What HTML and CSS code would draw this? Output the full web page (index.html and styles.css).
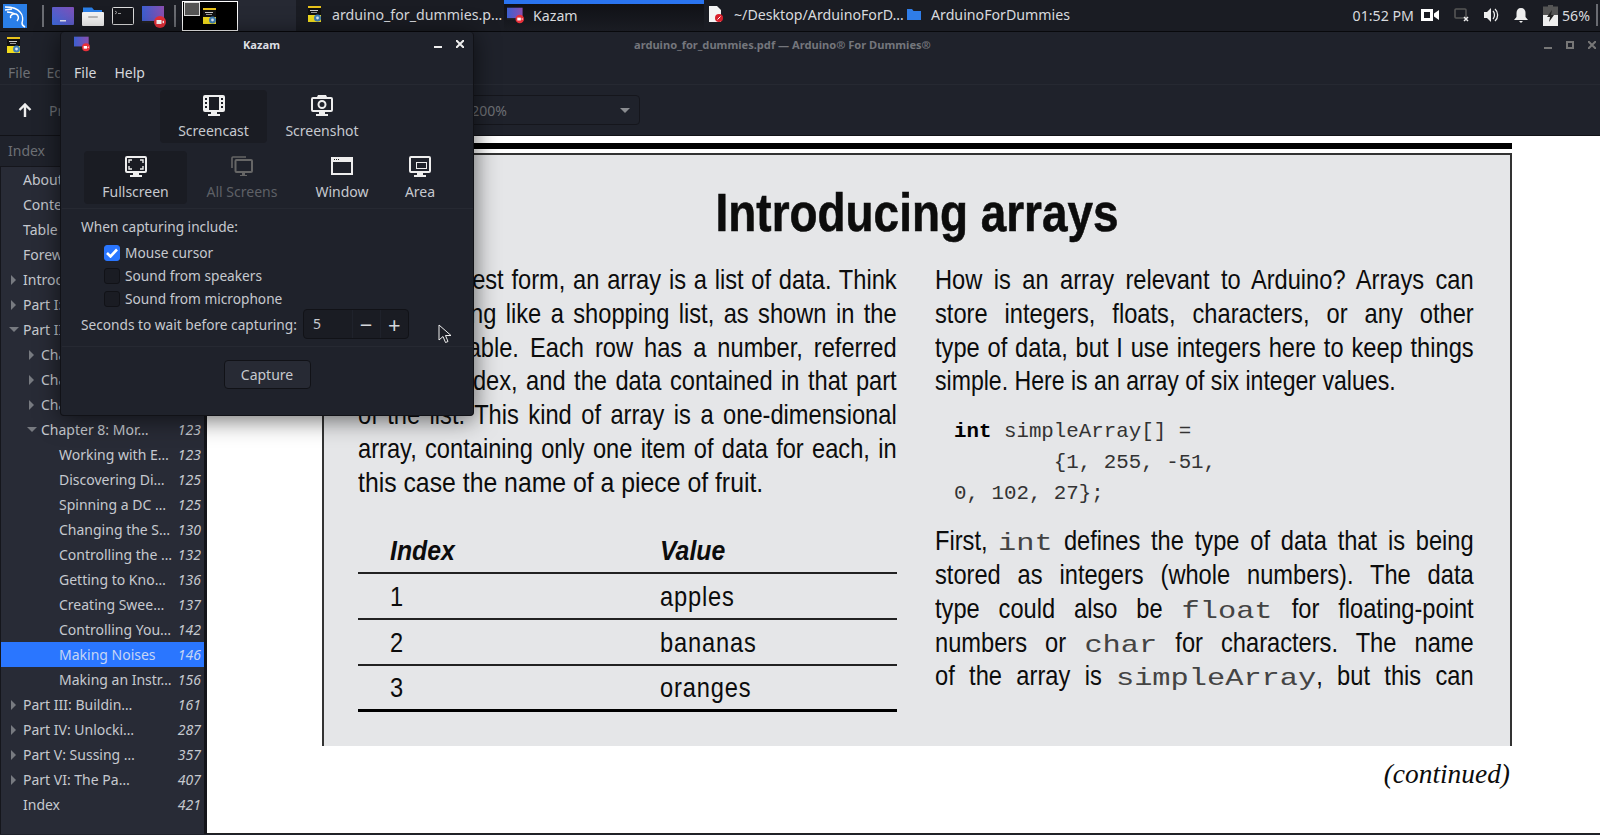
FILE: index.html
```html
<!DOCTYPE html>
<html lang="en">
<head>
    <meta charset="UTF-8">
    <title>arduino_for_dummies.pdf — Arduino® For Dummies®</title>
    <link rel="stylesheet" href="styles.css">
</head>
<body>
    <svg class="defs">
        <defs>
            <linearGradient id="kz" x1="0" y1="0" x2="1" y2="0">
                <stop offset="0" stop-color="#3c5fd0"/>
                <stop offset="1" stop-color="#8a4fb0"/>
            </linearGradient>
        </defs>
        <symbol id="book" viewBox="0 0 13 16">
            <rect width="13" height="16" fill="#111"/>
            <rect width="13" height="2" fill="#e8c21c"/>
            <rect x="2" y="4" width="8" height="1" fill="#ccc"/>
            <rect x="3" y="6" width="6" height="1" fill="#999"/>
            <rect y="9" width="13" height="7" fill="#f2dc1d"/>
            <circle cx="9.500" cy="12" r="3.500" fill="#3f7fb5"/>
            <circle cx="9.500" cy="12" r="1.400" fill="#dfe9f1"/>
        </symbol>
        <symbol id="kazam" viewBox="0 0 24 24">
            <rect x="0" y="1" width="22" height="15" fill="url(#kz)"/>
            <rect x="0" y="16" width="22" height="2" fill="#222"/>
            <circle cx="18" cy="17" r="6" fill="#e8303a"/>
            <rect x="14.500" y="15" width="5" height="4" fill="#fff"/>
            <path d="M20 17l2-1.500v3z" fill="#fff"/>
        </symbol>
    </svg>

    <header class="taskbar">
        <div class="launchers">
            <svg class="kali" width="24" height="24" viewBox="0 0 24 24">
                <rect width="24" height="24" fill="#2a7fe8"/>
                <path d="M2 3c6 0 12 1 15 5 3 3 3 8 2 11 0 2 1 3 3 4M2 6l7-1M4 8c3 0 6 1 8 2M8 14c-2-2 2-5 5-4 3 1 3 5 1 7" fill="none" stroke="#fff" stroke-width="1.500"/>
            </svg>
            <span class="sep"></span>
            <svg width="22" height="18" viewBox="0 0 22 18">
                <defs>
                    <linearGradient id="desk" x1="0" y1="1" x2="1" y2="0">
                        <stop offset="0" stop-color="#3a68d8"/>
                        <stop offset="1" stop-color="#8050b8"/>
                    </linearGradient>
                </defs>
                <rect width="22" height="18" rx="1" fill="url(#desk)"/>
                <rect x="8" y="13" width="6" height="1.500" fill="#dde"/>
            </svg>
            <svg width="22" height="20" viewBox="0 0 22 20">
                <path d="M1 5V1.500h9l2 2.500h8v2H1z" fill="#2a7fe8"/>
                <rect y="6" width="22" height="14" rx="1" fill="#f4f4f4"/>
                <rect x="6" y="10" width="10" height="2" rx="1" fill="#bbb"/>
            </svg>
            <svg width="22" height="18" viewBox="0 0 22 18">
                <rect x="0.500" y="0.500" width="21" height="17" rx="1" fill="#15161b" stroke="#ddd"/>
                <path d="M3 4l2 1.500L3 7" fill="none" stroke="#999"/>
                <rect x="6" y="6" width="3" height="1" fill="#999"/>
            </svg>
            <svg class="kazam-big" width="24" height="24"><use href="#kazam"/></svg>
            <span class="sep"></span>
        </div>
        <div class="pager">
            <span class="pager-win"></span>
            <svg width="13" height="16"><use href="#book"/></svg>
        </div>
        <div class="pager-rest"></div>
        <div class="task task-pdf">
            <svg width="13" height="16"><use href="#book"/></svg>
            <span>arduino_for_dummies.p…</span>
        </div>
        <div class="task task-kazam">
            <svg width="17" height="17"><use href="#kazam"/></svg>
            <span>Kazam</span>
        </div>
        <div class="task task-gedit">
            <svg width="14" height="16" viewBox="0 0 14 16">
                <path d="M0 0h8l4 4v12H0z" fill="#f4f4f4"/>
                <circle cx="10" cy="12" r="4" fill="#d8202c"/>
                <path d="M8.500 13.500l3-3" stroke="#fff"/>
            </svg>
            <span>~/Desktop/ArduinoForD…</span>
        </div>
        <div class="task task-folder">
            <svg width="14" height="11" viewBox="0 0 14 11">
                <path d="M0 0h5l1.500 2H14v9H0z" fill="#2f7de8"/>
            </svg>
            <span>ArduinoForDummies</span>
        </div>
        <div class="tray">
            <span class="clock">01:52 PM</span>
            <svg width="18" height="12" viewBox="0 0 18 12">
                <path d="M0 0h12v12H0zM3 3v6h6V3zM13 4.500L18 1v10l-5-3.500z" fill="#fff" fill-rule="evenodd"/>
            </svg>
            <svg width="15" height="14" viewBox="0 0 15 14">
                <rect x="1" y="1" width="11" height="9" rx="1" fill="none" stroke="#555" stroke-width="1.600"/>
                <path d="M10 9l4 4M14 9l-4 4" stroke="#eee" stroke-width="1.500"/>
            </svg>
            <svg width="15" height="14" viewBox="0 0 15 14">
                <path d="M0 4h3l4-4v14l-4-4H0z" fill="#eee"/>
                <path d="M9 3c2 2 2 6 0 8M11 1c3.500 3 3.500 9 0 12" fill="none" stroke="#eee" stroke-width="1.300"/>
            </svg>
            <svg width="14" height="15" viewBox="0 0 14 15">
                <path d="M7 0c3 0 4.500 2 4.500 5v4l2.500 3H0l2.500-3V5C2.500 2 4 0 7 0zM5 13h4l-2 2z" fill="#eee"/>
            </svg>
            <svg width="15" height="21" viewBox="0 0 15 21">
                <path d="M5 0h5v1.500h5V10H0V1.500h5z" fill="#555"/>
                <rect y="10" width="15" height="11" fill="#eee"/>
                <path d="M9 5L4 12h3l-1 5 5-7H8z" fill="#222"/>
            </svg>
            <span class="batt">56%</span>
            <span class="sep tray-sep"></span>
        </div>
    </header>

    <main class="evince">
        <div class="titlebar">
            <svg class="app-icon" width="13" height="16"><use href="#book"/></svg>
            <span class="win-title">arduino_for_dummies.pdf — Arduino® For Dummies®</span>
            <div class="win-btns">
                <svg width="8" height="8" viewBox="0 0 8 8"><rect y="6" width="8" height="2" fill="#777"/></svg>
                <svg width="8" height="8" viewBox="0 0 8 8"><rect x="1" y="1" width="6" height="6" fill="none" stroke="#777" stroke-width="2"/></svg>
                <svg width="8" height="8" viewBox="0 0 8 8"><path d="M0 0l8 8M8 0L0 8" stroke="#777" stroke-width="2"/></svg>
            </div>
        </div>
        <nav class="menubar"><span>File</span><span>Edit</span></nav>
        <div class="toolbar">
            <svg class="up" width="14" height="14" viewBox="0 0 14 14"><path d="M7 14V2M1.500 7L7 1.500 12.500 7" fill="none" stroke="#eee" stroke-width="2.400"/></svg>
            <span class="prev">Previous</span>
            <div class="zoom-box"><span>200%</span><i class="caret"></i></div>
        </div>
        <div class="content">
            <aside class="sidebar">
                <div class="side-head">Index</div>
                <ul class="tree">
                    <li class="lv0"><i></i><span>About the Aut…</span><em>1</em></li>
                    <li class="lv0"><i></i><span>Contents at a…</span><em>9</em></li>
                    <li class="lv0"><i></i><span>Table of Cont…</span><em>11</em></li>
                    <li class="lv0"><i></i><span>Foreword</span><em>17</em></li>
                    <li class="lv0"><i class="closed"></i><span>Introduction</span><em>19</em></li>
                    <li class="lv0"><i class="closed"></i><span>Part I: Getting…</span><em>7</em></li>
                    <li class="lv0"><i class="open"></i><span>Part II: Gettin…</span><em>65</em></li>
                    <li class="lv1"><i class="closed"></i><span>Chapter 5: Ge…</span><em>67</em></li>
                    <li class="lv1"><i class="closed"></i><span>Chapter 6: Ha…</span><em>87</em></li>
                    <li class="lv1"><i class="closed"></i><span>Chapter 7: Ba…</span><em>101</em></li>
                    <li class="lv1"><i class="open"></i><span>Chapter 8: Mor…</span><em>123</em></li>
                    <li class="lv2"><i></i><span>Working with E…</span><em>123</em></li>
                    <li class="lv2"><i></i><span>Discovering Di…</span><em>125</em></li>
                    <li class="lv2"><i></i><span>Spinning a DC …</span><em>125</em></li>
                    <li class="lv2"><i></i><span>Changing the S…</span><em>130</em></li>
                    <li class="lv2"><i></i><span>Controlling the …</span><em>132</em></li>
                    <li class="lv2"><i></i><span>Getting to Kno…</span><em>136</em></li>
                    <li class="lv2"><i></i><span>Creating Swee…</span><em>137</em></li>
                    <li class="lv2"><i></i><span>Controlling You…</span><em>142</em></li>
                    <li class="lv2 selected"><i></i><span>Making Noises</span><em>146</em></li>
                    <li class="lv2"><i></i><span>Making an Instr…</span><em>156</em></li>
                    <li class="lv0"><i class="closed"></i><span>Part III: Buildin…</span><em>161</em></li>
                    <li class="lv0"><i class="closed"></i><span>Part IV: Unlocki…</span><em>287</em></li>
                    <li class="lv0"><i class="closed"></i><span>Part V: Sussing …</span><em>357</em></li>
                    <li class="lv0"><i class="closed"></i><span>Part VI: The Pa…</span><em>407</em></li>
                    <li class="lv0"><i></i><span>Index</span><em>421</em></li>
                </ul>
            </aside>
            <section class="page">
                <div class="rule"></div>
                <article class="box">
                    <h1><span>Introducing arrays</span></h1>
                    <div class="cols">
                        <div class="col">
                            <p>
                                <span class="ln">In its simplest form, an array is a list of data. Think</span>
                                <span class="ln">of something like a shopping list, as shown in the</span>
                                <span class="ln">following table. Each row has a number, referred</span>
                                <span class="ln">to as an index, and the data contained in that part</span>
                                <span class="ln">of the list. This kind of array is a one-dimensional</span>
                                <span class="ln">array, containing only one item of data for each, in</span>
                                <span class="ln last wide">this case the name of a piece of fruit.</span>
                            </p>
                            <table class="fruit">
                                <thead><tr><th><span>Index</span></th><th><span>Value</span></th></tr></thead>
                                <tbody>
                                    <tr><td><span>1</span></td><td><span>apples</span></td></tr>
                                    <tr><td><span>2</span></td><td><span>bananas</span></td></tr>
                                    <tr><td><span>3</span></td><td><span>oranges</span></td></tr>
                                </tbody>
                            </table>
                        </div>
                        <div class="col">
                            <p>
                                <span class="ln">How is an array relevant to Arduino? Arrays can</span>
                                <span class="ln">store integers, floats, characters, or any other</span>
                                <span class="ln">type of data, but I use integers here to keep things</span>
                                <span class="ln last">simple. Here is an array of six integer values.</span>
                            </p>
                            <pre class="code"><b>int</b> simpleArray[] =
        {1, 255, -51,
0, 102, 27};</pre>
                            <p>
                                <span class="ln">First, <code class="w3">int</code> defines the type of data that is being</span>
                                <span class="ln">stored as integers (whole numbers). The data</span>
                                <span class="ln">type could also be <code class="w5">float</code> for floating-point</span>
                                <span class="ln">numbers or <code class="w4">char</code> for characters. The name</span>
                                <span class="ln">of the array is <code class="w11">simpleArray</code>, but this can</span>
                            </p>
                        </div>
                    </div>
                </article>
                <div class="continued">(continued)</div>
            </section>
        </div>
    </main>

    <div class="kazam-win">
        <div class="kz-title">
            <svg width="16" height="16"><use href="#kazam"/></svg>
            <span>Kazam</span>
            <svg class="kz-min" width="8" height="8" viewBox="0 0 8 8"><rect y="6" width="8" height="2" fill="#eee"/></svg>
            <svg class="kz-close" width="8" height="8" viewBox="0 0 8 8"><path d="M0 0l8 8M8 0L0 8" stroke="#eee" stroke-width="2"/></svg>
        </div>
        <nav class="kz-menu"><span>File</span><span>Help</span></nav>
        <div class="kz-modes">
            <div class="kz-btn on">
                <svg width="22" height="21" viewBox="0 0 22 21">
                    <path d="M2 0h18a2 2 0 0 1 2 2v13a2 2 0 0 1-2 2h-6v2h3v2H5v-2h3v-2H2a2 2 0 0 1-2-2V2a2 2 0 0 1 2-2zM6 2v13h10V2zM2 3v2h2V3zM2 7v2h2V7zM2 11v2h2v-2zM18 3v2h2V3zM18 7v2h2V7zM18 11v2h2v-2z" fill="#eee" fill-rule="evenodd"/>
                </svg>
                <span>Screencast</span>
            </div>
            <div class="kz-btn">
                <svg width="22" height="21" viewBox="0 0 22 21">
                    <path d="M7 0h8l1 2h4a2 2 0 0 1 2 2v11a2 2 0 0 1-2 2h-6v2h3v2H5v-2h3v-2H2a2 2 0 0 1-2-2V4a2 2 0 0 1 2-2h4zM2 4v11h18V4z" fill="#eee" fill-rule="evenodd"/>
                    <circle cx="11" cy="9.500" r="3.500" fill="none" stroke="#eee" stroke-width="2"/>
                </svg>
                <span>Screenshot</span>
            </div>
        </div>
        <div class="kz-areas">
            <div class="kz-btn on">
                <svg width="22" height="21" viewBox="0 0 22 21">
                    <path d="M2 0h18a2 2 0 0 1 2 2v13a2 2 0 0 1-2 2h-6v2h3v2H5v-2h3v-2H2a2 2 0 0 1-2-2V2a2 2 0 0 1 2-2zM2 2v13h18V2z" fill="#eee" fill-rule="evenodd"/>
                    <path d="M4 7V4h3M15 4h3v3M18 10v3h-3M7 13H4v-3" fill="none" stroke="#eee" stroke-width="1.400"/>
                </svg>
                <span>Fullscreen</span>
            </div>
            <div class="kz-btn off">
                <svg width="22" height="21" viewBox="0 0 22 21">
                    <path d="M1 12V2a1 1 0 0 1 1-1h13" fill="none" stroke="#666" stroke-width="1.600"/>
                    <rect x="4.500" y="4" width="16.500" height="12" rx="1" fill="none" stroke="#666" stroke-width="2"/>
                    <path d="M11 16h3v3h2v1H9v-1h2z" fill="#666"/>
                </svg>
                <span>All Screens</span>
            </div>
            <div class="kz-btn">
                <svg width="22" height="21" viewBox="0 0 22 21">
                    <path d="M0 1h22v18H0zM2 6v11h18V6z" fill="#eee" fill-rule="evenodd"/>
                    <path d="M3 3h1v1H3zM5 3h1v1H5zM7 3h1v1H7z" fill="#222"/>
                </svg>
                <span>Window</span>
            </div>
            <div class="kz-btn">
                <svg width="22" height="21" viewBox="0 0 22 21">
                    <path d="M2 0h18a2 2 0 0 1 2 2v13a2 2 0 0 1-2 2h-6v2h3v2H5v-2h3v-2H2a2 2 0 0 1-2-2V2a2 2 0 0 1 2-2zM2 2v13h18V2z" fill="#eee" fill-rule="evenodd"/>
                    <rect x="7.500" y="6.500" width="10" height="6" fill="none" stroke="#eee"/>
                </svg>
                <span>Area</span>
            </div>
        </div>
        <div class="kz-options">
            <div class="kz-include">When capturing include:</div>
            <label class="kz-check"><i class="box-on"><svg width="12" height="10" viewBox="0 0 12 10"><path d="M1 5l3.500 3.500L11 1.500" fill="none" stroke="#fff" stroke-width="2.600"/></svg></i>Mouse cursor</label>
            <label class="kz-check"><i></i>Sound from speakers</label>
            <label class="kz-check"><i></i>Sound from microphone</label>
            <div class="kz-wait">
                <span>Seconds to wait before capturing:</span>
                <div class="spin">
                    <span class="spin-val">5</span>
                    <span class="spin-btn">−</span>
                    <span class="spin-btn">+</span>
                </div>
            </div>
        </div>
        <div class="kz-foot"><button class="capture">Capture</button></div>
        <svg class="pointer" width="14" height="20" viewBox="0 0 14 20">
            <path d="M1 1v15l4-3.500 2.500 6 2.500-1-2.500-6H13z" fill="#1c1e26" stroke="#eee"/>
        </svg>
    </div>
</body>
</html>
```

FILE: styles.css
```css
* {
    box-sizing: border-box;
}
html, body {
    margin: 0;
    height: 835px;
    overflow: hidden;
}
body {
    position: relative;
    background: #1f222b;
    color: #c6c9cf;
    font-family: "Noto Sans", sans-serif;
    font-size: 14px;
}
.defs {
    position: absolute;
    width: 0;
    height: 0;
}

/* panel */
.taskbar {
    display: flex;
    align-items: center;
    height: 32px;
    background: #1a1c23;
    border-bottom: 1px solid #08090c;
}
.launchers {
    display: flex;
    align-items: center;
    gap: 8px;
    width: 182px;
    padding-left: 3px;
}
.kali {
    margin-right: 7px;
}
.sep {
    width: 2px;
    height: 22px;
    background: #6a6c72;
}
.kazam-big {
    margin-top: 2px;
}
.pager {
    display: flex;
    align-items: center;
    justify-content: flex-end;
    position: relative;
    width: 56px;
    height: 30px;
    padding-right: 21px;
    background: #000;
    border: 1px solid #fff;
}
.pager-win {
    position: absolute;
    left: 1px;
    top: 0;
    width: 16px;
    height: 14px;
    background: #555;
    border: 1px solid #ddd;
}
.pager-rest {
    width: 58px;
    height: 31px;
    background: #262933;
}
.task {
    display: flex;
    align-items: center;
    gap: 11px;
    height: 31px;
    padding-bottom: 3px;
    color: #d8dade;
    font-size: 14.200px;
    white-space: nowrap;
}
.task-pdf {
    width: 208px;
    padding-left: 12px;
}
.task-kazam {
    width: 200px;
    padding-left: 3px;
    padding-bottom: 4px;
    gap: 9px;
    background: linear-gradient(#101116, #1a1c23);
    border-top: 4px solid #2a74f0;
}
.task-gedit {
    width: 203px;
    padding-left: 5px;
}
.task-folder {
    gap: 10px;
}
.tray {
    display: flex;
    align-items: center;
    gap: 15px;
    margin-left: auto;
    padding-right: 2px;
    padding-bottom: 1px;
    color: #d8dade;
}
.clock {
    margin-right: -8px;
    font-size: 14.200px;
}
.batt {
    margin-left: -11px;
    font-size: 14.200px;
}
.tray-sep {
    margin-left: -9px;
}

/* document viewer */
.titlebar {
    display: flex;
    align-items: center;
    position: relative;
    height: 28px;
    padding: 0 4px 3px 7px;
    background: #1f222b;
}
.win-title {
    position: absolute;
    left: 634px;
    color: #74767c;
    font-size: 11.100px;
    font-weight: 700;
}
.win-btns {
    display: flex;
    gap: 14px;
    margin-left: auto;
}
.menubar {
    display: flex;
    gap: 16px;
    align-items: center;
    height: 25px;
    padding-left: 8px;
    color: #6d7075;
    border-bottom: 1px solid #262932;
}
.toolbar {
    display: flex;
    align-items: center;
    height: 51px;
    padding-left: 18px;
    color: #6d7075;
    border-bottom: 1px solid #111217;
}
.prev {
    margin-left: 17px;
}
.zoom-box {
    display: flex;
    align-items: center;
    justify-content: space-between;
    width: 240px;
    height: 30px;
    margin-left: 295px;
    padding: 0 9px 0 70px;
    border: 1px solid #15161c;
    border-radius: 4px;
}
.caret {
    border-left: 5px solid transparent;
    border-right: 5px solid transparent;
    border-top: 5px solid #8a8c90;
}
.content {
    display: flex;
    height: 698px;
}
.sidebar {
    width: 207px;
    flex: none;
    background: #1f222b;
    border-right: 3px solid #14151a;
}
.side-head {
    display: flex;
    align-items: center;
    height: 31px;
    padding: 0 0 2px 8px;
    color: #6d7075;
    border-bottom: 1px solid #15161c;
}
.tree {
    margin: 0;
    padding: 0;
    height: 667px;
    list-style: none;
    background: #282b36;
    border-left: 1px solid #15161c;
}
.tree li {
    display: flex;
    align-items: center;
    height: 25px;
    padding-right: 3px;
    white-space: nowrap;
}
.tree li > i {
    display: flex;
    align-items: center;
    justify-content: center;
    width: 19px;
    flex: none;
}
.tree .closed::before {
    content: "";
    border-top: 5px solid transparent;
    border-bottom: 5px solid transparent;
    border-left: 5px solid #777a80;
}
.tree .open::before {
    content: "";
    border-left: 5px solid transparent;
    border-right: 5px solid transparent;
    border-top: 5px solid #777a80;
}
.lv0 {
    padding-left: 3px;
}
.lv1 {
    padding-left: 21px;
}
.lv2 {
    padding-left: 39px;
}
.tree em {
    margin-left: auto;
}
.tree .selected {
    background: #2a76ff;
    color: #c5d5f5;
}

/* pdf page */
.page {
    flex: 1;
    padding: 2px 0 0 115px;
    background: #fff;
    border-bottom: 1px solid #222;
    color: #0c0c0c;
}
.rule {
    width: 1190px;
    height: 6px;
    margin-top: 5px;
    background: #000;
}
.box {
    width: 1190px;
    height: 593px;
    margin-top: 4px;
    padding: 0 34px;
    background: #e5e6e8;
    border: 2px solid #333;
    border-bottom: 0;
    overflow: hidden;
}
h1 {
    margin: 24px 0 0;
    height: 84px;
    text-align: center;
    font-family: "Liberation Sans", sans-serif;
    font-size: 54px;
    line-height: 66px;
    font-weight: 700;
}
h1 span {
    display: inline-block;
    transform: scaleX(0.85);
    -webkit-text-stroke: 0.6px #0c0c0c;
}
.cols {
    display: grid;
    grid-template-columns: 539px 539px;
    gap: 38px;
    font-family: "Liberation Sans", sans-serif;
    font-size: 28.500px;
    line-height: 33.800px;
}
.col p {
    margin: 0;
}
/* no condensed family here, so each line is squeezed to the column */
.ln {
    display: block;
    width: 649px;
    white-space: nowrap;
    word-spacing: -3px;
    text-align: justify;
    text-align-last: justify;
    transform: scaleX(0.83);
    transform-origin: 0 0;
}
.ln.last {
    word-spacing: 0;
    text-align-last: left;
    transform: scaleX(0.81);
}
.ln.wide {
    transform: scaleX(0.87);
}
code {
    display: inline-block;
    font-family: "Liberation Mono", monospace;
    font-size: 24px;
    line-height: 1;
    text-align-last: left;
    color: #444;
    transform: scaleX(1.523);
    transform-origin: 0 0;
}
.w3 {
    width: 66px;
}
.w4 {
    width: 88px;
}
.w5 {
    width: 110px;
}
.w11 {
    width: 241px;
}
.code {
    margin: 19px 0 15px 19px;
    font-family: "Liberation Mono", monospace;
    font-size: 20.800px;
    line-height: 30.700px;
    color: #333;
}
.code b {
    color: #000;
}
.fruit {
    width: 539px;
    margin-top: 31px;
    border-collapse: collapse;
    table-layout: fixed;
}
.fruit th, .fruit td {
    height: 46px;
    padding: 0 0 0 32px;
    text-align: left;
    border-bottom: 2px solid #222;
}
.fruit th {
    height: 42px;
    font-style: italic;
    font-weight: 700;
}
.fruit span {
    display: inline-block;
    transform: scaleX(0.87);
    transform-origin: 0 0;
}
.fruit td {
    padding-top: 2px;
    letter-spacing: 1px;
}
.fruit td span {
    transform: scaleX(0.83);
}
.fruit tr:last-child td {
    border-bottom: 3px solid #000;
}
.continued {
    width: 1188px;
    padding-top: 13px;
    text-align: right;
    font-family: "Liberation Serif", serif;
    font-style: italic;
    font-size: 27.400px;
}

/* kazam window */
.kazam-win {
    position: absolute;
    left: 60px;
    top: 32px;
    width: 414px;
    height: 384px;
    padding-left: 1px;
    background: #1f222b;
    border: 1px solid #111217;
    border-top: 0;
    box-shadow: 0 3px 24px rgba(0, 0, 0, 0.6);
    border-radius: 4px;
}
.kz-title {
    display: flex;
    align-items: center;
    position: relative;
    height: 26px;
    padding: 0 0 2px 12px;
    color: #dcdee2;
    font-size: 11.100px;
    font-weight: 700;
}
.kz-title span {
    position: absolute;
    left: 181px;
}
.kz-min {
    position: absolute;
    left: 372px;
}
.kz-close {
    position: absolute;
    left: 394px;
}
.kz-menu {
    display: flex;
    gap: 18px;
    align-items: center;
    height: 27px;
    padding: 2px 0 0 12px;
    color: #d5d7dc;
    border-bottom: 1px solid #262932;
}
.kz-btn {
    display: flex;
    flex-direction: column;
    align-items: center;
    height: 53px;
    padding-top: 5px;
    border-radius: 4px;
}
.kz-btn span {
    margin-top: 5px;
}
.kz-btn.on {
    background: #1a1c23;
}
.kz-btn.off {
    color: #5e6066;
}
.kz-modes {
    display: grid;
    grid-template-columns: 107px 110px;
    justify-content: center;
    margin: 5px 0 0 2px;
}
.kz-areas {
    display: grid;
    grid-template-columns: 103px 110px 90px 66px;
    margin-top: 8px;
    padding: 0 0 4px 22px;
    border-bottom: 1px solid #262932;
}
.kz-options {
    height: 138px;
    padding-left: 19px;
    font-size: 13.700px;
    border-bottom: 1px solid #262932;
}
.kz-include {
    height: 25px;
    padding-top: 8px;
    line-height: 20px;
    margin-bottom: 7px;
}
.kz-check {
    display: flex;
    align-items: center;
    gap: 5px;
    height: 23px;
    padding-left: 23px;
}
.kz-check i {
    display: flex;
    align-items: center;
    justify-content: center;
    width: 16px;
    height: 16px;
    background: #1a1c23;
    border: 1px solid #111217;
    border-radius: 3px;
}
.kz-check .box-on {
    background: #2a76ff;
    border-color: #2a76ff;
}
.kz-wait {
    display: flex;
    align-items: center;
    gap: 6px;
    height: 30px;
    margin-top: -1px;
}
.spin {
    display: flex;
    width: 106px;
    height: 30px;
    background: #1a1c23;
    border: 1px solid #111217;
    border-radius: 4px;
    line-height: 28px;
}
.spin-val {
    width: 48px;
    padding-left: 9px;
    font-size: 14px;
}
.spin-btn {
    width: 28.500px;
    text-align: center;
    font-size: 22px;
    color: #d5d7dc;
    border-left: 1px solid #1f222b;
}
.kz-foot {
    display: flex;
    justify-content: center;
    padding-top: 13px;
}
.capture {
    width: 87px;
    height: 29px;
    margin-left: -1px;
    padding: 0;
    background: #272a34;
    color: #c6c9cf;
    font: inherit;
    border: 1px solid #111217;
    border-radius: 4px;
}
.pointer {
    position: absolute;
    left: 377px;
    top: 292px;
}
```
